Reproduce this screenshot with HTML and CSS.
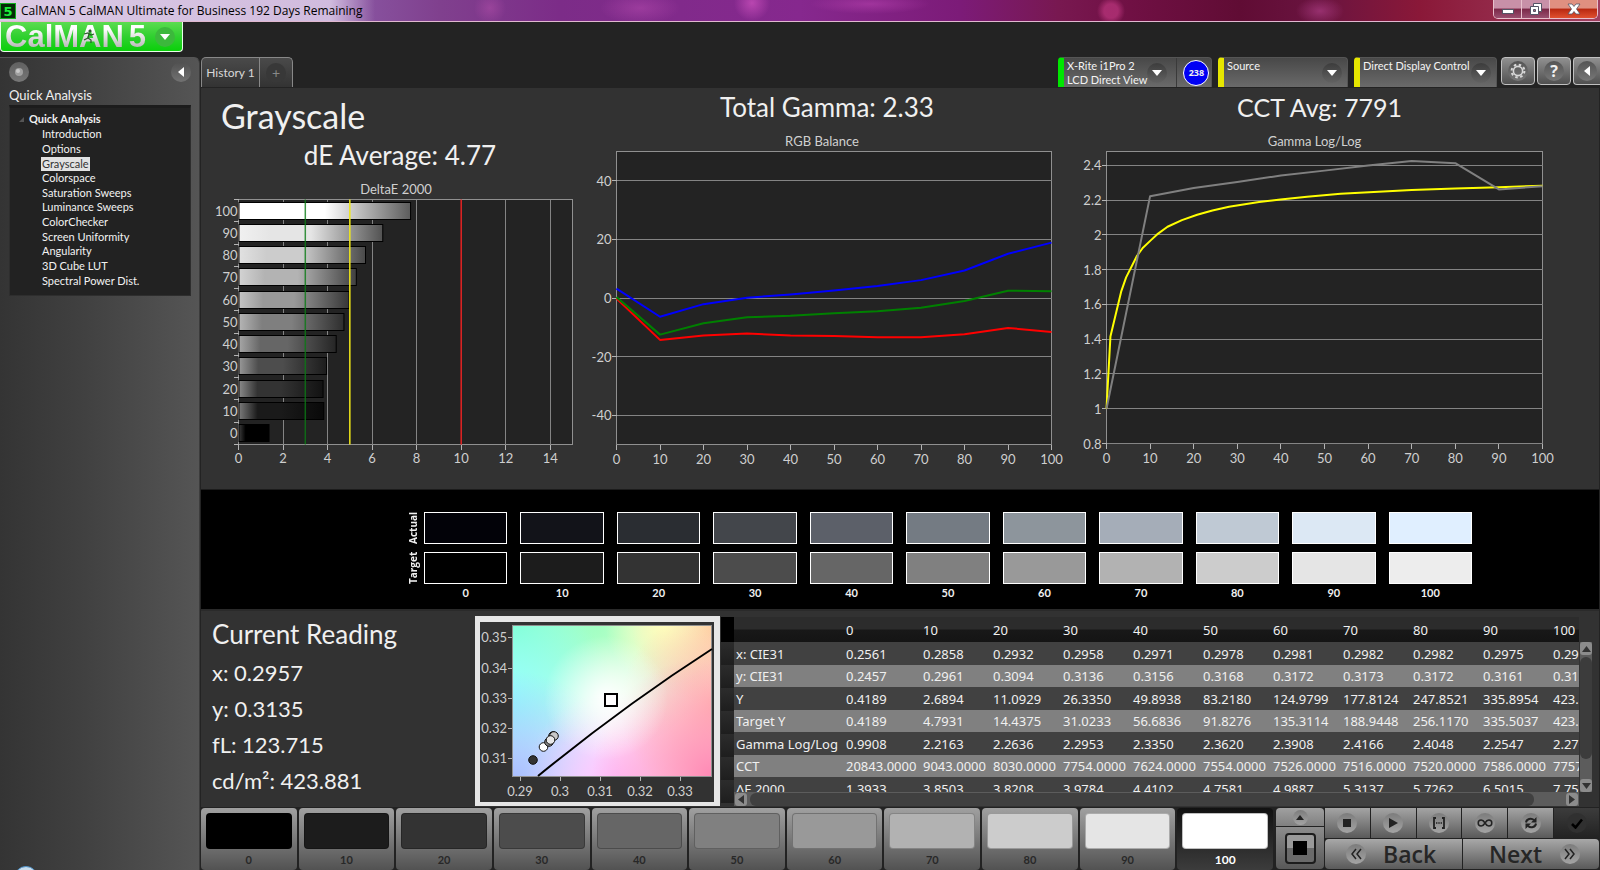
FILE: index.html
```html
<!DOCTYPE html>
<html lang="en">
<head>
<meta charset="utf-8">
<title>CalMAN 5 CalMAN Ultimate for Business 192 Days Remaining</title>
<link rel="stylesheet" href="styles.css">
</head>
<body>
<header class="titlebar">
  <span class="app-icon">5</span>
  <span class="titlebar-text">CalMAN 5 CalMAN Ultimate for Business 192 Days Remaining</span>
  <div class="window-buttons">
    <button class="win-btn" aria-label="Minimize"><svg width="14" height="12" viewBox="0 0 14 12"><rect x="1.5" y="6.500" width="11" height="4" fill="#fff" stroke="#556" /></svg></button>
    <button class="win-btn" aria-label="Restore"><svg width="14" height="14" viewBox="0 0 14 14"><path d="M4.500 1.500h8v8h-8z" fill="#fff" stroke="#556"/><path d="M1.500 4.500h8v8h-8z" fill="#fff" stroke="#556"/><path d="M4.500 7.500h2v2h-2z" fill="#a67" stroke="#556"/></svg></button>
    <button class="win-btn win-close" aria-label="Close"><svg width="14" height="12" viewBox="0 0 14 12"><path d="M1 1h4l2 2.500L9 1h4L9.500 6l3.500 5H9L7 8.500 5 11H1l3.500-5z" fill="#fff" stroke="#556" stroke-width=".8"/></svg></button>
  </div>
</header>

<div class="workspace">
  <aside class="left">
    <button class="logo" aria-label="CalMAN 5 menu">
      <span class="logo-text">CalMAN<span class="logo-num">5</span></span>
      <svg class="runner" width="14" height="16" viewBox="0 0 14 16"><circle cx="8" cy="3" r="1.600" fill="#2a5a2a"/><path d="M2 6l4-1 3 2 3-1M7 6l-1 4 3 2v3M6 10l-4 2" fill="none" stroke="#2a5a2a" stroke-width="1.200"/></svg>
      <span class="logo-drop"><svg width="10" height="6" viewBox="0 0 10 6"><path d="M0 0h10L5 6z" fill="#fff"/></svg></span>
    </button>
    <nav class="sidebar">
      <div class="sidebar-tools">
        <button class="knob" aria-label="Pin"><svg width="10" height="10" viewBox="0 0 10 10"><circle cx="5" cy="5" r="4" fill="#a0a0a0"/><circle cx="4" cy="4" r="2" fill="#c8c8c8"/></svg></button>
        <button class="knob knob-arrow" aria-label="Collapse"><svg width="6" height="10" viewBox="0 0 6 10"><path d="M6 0v10L0 5z" fill="#fff"/></svg></button>
      </div>
      <h2 class="sidebar-title">Quick Analysis</h2>
      <div class="tree">
        <div class="tree-root"><svg width="5" height="5" viewBox="0 0 5 5"><path d="M5 0v5H0z" fill="#555"/></svg><span>Quick Analysis</span></div>
        <ul class="tree-list">
          <li><a href="#">Introduction</a></li>
          <li><a href="#">Options</a></li>
          <li><a href="#" class="selected">Grayscale</a></li>
          <li><a href="#">Colorspace</a></li>
          <li><a href="#">Saturation Sweeps</a></li>
          <li><a href="#">Luminance Sweeps</a></li>
          <li><a href="#">ColorChecker</a></li>
          <li><a href="#">Screen Uniformity</a></li>
          <li><a href="#">Angularity</a></li>
          <li><a href="#">3D Cube LUT</a></li>
          <li><a href="#">Spectral Power Dist.</a></li>
        </ul>
      </div>
      <span class="orb"></span>
    </nav>
  </aside>

  <div class="right">
    <div class="topbar">
      <div class="tabs">
        <button class="tab">History 1</button>
        <button class="tab tab-add" aria-label="Add tab"><span>+</span></button>
      </div>
      <div class="devices">
        <div class="device device-green device-meter">
          <button class="device-main"><span class="device-text">X-Rite i1Pro 2<br>LCD Direct View</span><span class="drop"><svg width="10" height="6" viewBox="0 0 10 6"><path d="M0 0h10L5 6z" fill="#fff"/></svg></span></button>
          <span class="badge-cell"><span class="badge">238</span></span>
        </div>
        <div class="device device-source">
          <button class="device-main"><span class="device-text">Source</span><span class="drop"><svg width="10" height="6" viewBox="0 0 10 6"><path d="M0 0h10L5 6z" fill="#fff"/></svg></span></button>
        </div>
        <div class="device device-display">
          <button class="device-main"><span class="device-text">Direct Display Control</span><span class="drop"><svg width="10" height="6" viewBox="0 0 10 6"><path d="M0 0h10L5 6z" fill="#fff"/></svg></span></button>
        </div>
        <button class="tool" aria-label="Settings"><span class="tool-disc"><svg width="16" height="16" viewBox="0 0 16 16"><circle cx="8" cy="8" r="4.600" fill="none" stroke="#d8d8d8" stroke-width="1.600"/><circle cx="8" cy="8" r="6.400" fill="none" stroke="#d8d8d8" stroke-width="2" stroke-dasharray="2.500 2.526"/></svg></span></button>
        <button class="tool" aria-label="Help"><span class="tool-disc tool-q">?</span></button>
        <button class="tool tool-last" aria-label="Hide"><span class="tool-disc"><svg width="6" height="10" viewBox="0 0 6 10"><path d="M6 0v10L0 5z" fill="#fff"/></svg></span></button>
      </div>
    </div>

    <main class="main">
      <section class="charts">
        <div class="chart-col chart-de">
          <h1 class="page-title">Grayscale</h1>
          <h2 class="metric">dE Average: 4.77</h2>
          <h3 class="chart-title">DeltaE 2000</h3>
          <svg id="chart-de" class="chart" viewBox="0 0 390 280" role="img" aria-label="DeltaE 2000"></svg>
        </div>
        <div class="chart-col chart-rgb">
          <h2 class="metric">Total Gamma: 2.33</h2>
          <h3 class="chart-title">RGB Balance</h3>
          <svg id="chart-rgb" class="chart" viewBox="0 0 472 328" role="img" aria-label="RGB Balance"></svg>
        </div>
        <div class="chart-col chart-gamma">
          <h2 class="metric">CCT Avg: 7791</h2>
          <h3 class="chart-title">Gamma Log/Log</h3>
          <svg id="chart-gamma" class="chart" viewBox="0 0 497 328" role="img" aria-label="Gamma Log/Log"></svg>
        </div>
      </section>

      <section class="band">
        <div class="band-labels"><span>Actual</span><span>Target</span></div>
        <div class="band-grid" id="band"></div>
      </section>

      <section class="details">
        <div class="reading">
          <h2>Current Reading</h2>
          <p>x: 0.2957</p>
          <p>y: 0.3135</p>
          <p>fL: 123.715</p>
          <p>cd/m²: 423.881</p>
        </div>
        <svg id="chart-cie" class="cie" width="245" height="190" viewBox="0 0 245 190" role="img" aria-label="CIE chart"></svg>
        <div class="grid-view">
          <div class="row-heads"><i></i><i></i><i></i><i></i><i></i><i></i><i></i><i></i></div>
          <div class="table-clip"><table id="data"></table></div>
          <div class="vscroll"><button aria-label="Scroll up"><svg width="9" height="6" viewBox="0 0 9 6"><path d="M4.500 0L9 6H0z" fill="#333"/></svg></button><span class="vthumb"></span><button aria-label="Scroll down"><svg width="9" height="6" viewBox="0 0 9 6"><path d="M0 0h9L4.500 6z" fill="#333"/></svg></button></div>
          <div class="hscroll"><button aria-label="Scroll left"><svg width="6" height="9" viewBox="0 0 6 9"><path d="M6 0v9L0 4.500z" fill="#333"/></svg></button><span class="hthumb"></span><button aria-label="Scroll right"><svg width="6" height="9" viewBox="0 0 6 9"><path d="M0 0v9l6-4.500z" fill="#333"/></svg></button></div>
        </div>
      </section>

      <footer class="footer">
        <div class="cards" id="cards"></div>
        <div class="pattern">
          <button class="pattern-up" aria-label="Expand"><span class="disc disc-small"><svg width="8" height="5" viewBox="0 0 8 5"><path d="M4 0l4 5H0z" fill="#222"/></svg></span></button>
          <button class="pattern-window" aria-label="Pattern window"><span><i></i></span></button>
        </div>
        <div class="controls">
          <div class="transport">
            <button aria-label="Stop"><span class="disc"><svg width="10" height="10" viewBox="0 0 10 10"><path d="M1 1h8v8H1z" fill="#222"/></svg></span></button>
            <button aria-label="Play"><span class="disc"><svg width="10" height="10" viewBox="0 0 10 10"><path d="M1 0l9 5-9 5z" fill="#222"/></svg></span></button>
            <button aria-label="Read series"><span class="disc"><svg width="14" height="12" viewBox="0 0 14 12"><path d="M4 1H2v10h2M10 1h2v10h-2" fill="none" stroke="#222" stroke-width="1.800"/><path d="M4 6h6" stroke="#222" stroke-width="1.600" stroke-dasharray="1.400 .9"/></svg></span></button>
            <button aria-label="Continuous"><span class="disc"><svg width="16" height="10" viewBox="0 0 16 10"><path d="M8 5C6.500 2.500 5.500 2 4.200 2a3 3 0 0 0 0 6C5.500 8 6.500 7.500 8 5s2.500-3 3.800-3a3 3 0 0 1 0 6C10.500 8 9.500 7.500 8 5z" fill="none" stroke="#222" stroke-width="1.500"/></svg></span></button>
            <button aria-label="Refresh"><span class="disc"><svg width="14" height="14" viewBox="0 0 14 14"><path d="M2 6.500C2.500 3 7 1.500 10 4M12 7.500C11.500 11 7 12.500 4 10" fill="none" stroke="#222" stroke-width="2"/><path d="M12.500 1v5.500H7zM1.500 13V7.500H7z" fill="#222"/></svg></span></button>
            <button class="dark" aria-label="Accept"><span class="disc disc-dark"><svg width="12" height="11" viewBox="0 0 12 11"><path d="M1 6l3.500 3.500L11 1.500" fill="none" stroke="#000" stroke-width="2.600"/></svg></span></button>
          </div>
          <div class="steps">
            <button class="back"><span class="disc"><svg width="12" height="12" viewBox="0 0 12 12"><path d="M6 1L2 6l4 5M11 1L7 6l4 5" fill="none" stroke="#222" stroke-width="1.500"/></svg></span><span>Back</span></button>
            <button class="next"><span>Next</span><span class="disc"><svg width="12" height="12" viewBox="0 0 12 12"><path d="M1 1l4 5-4 5M6 1l4 5-4 5" fill="none" stroke="#222" stroke-width="1.500"/></svg></span></button>
          </div>
        </div>
      </footer>
    </main>
  </div>
</div>
<script src="app.js"></script>
</body>
</html>
```
FILE: styles.css
```css
* { box-sizing: border-box; }
body {
  margin: 0;
  min-height: 100vh;
  display: flex;
  flex-direction: column;
  background: #232323;
  color: #f0f0f0;
  font-family: Lato, "Open Sans", sans-serif;
  font-size: 12px;
  overflow: hidden;
}
button { font: inherit; color: inherit; border: 0; padding: 0; background: none; }
h1, h2, h3, p, ul { margin: 0; padding: 0; font-weight: 400; }
svg { display: block; }

/* Title bar */
.titlebar {
  flex: none;
  height: 22px;
  display: flex;
  align-items: center;
  border-bottom: 1px solid #e0b8d0;
  background:
    linear-gradient(90deg, rgba(226, 212, 236, .8) 0, rgba(226, 212, 236, .8) 330px, rgba(226, 212, 236, 0) 375px),
    radial-gradient(circle 16px at 490px 8px, rgba(180, 80, 170, .5), transparent),
    radial-gradient(circle 18px at 752px 3px, rgba(220, 90, 200, .6), transparent),
    radial-gradient(circle 14px at 1111px 11px, rgba(180, 50, 120, .8) 50%, transparent),
    radial-gradient(ellipse 40px 16px at 640px 8px, rgba(190, 80, 180, .45), transparent),
    radial-gradient(ellipse 60px 10px at 870px 4px, rgba(190, 70, 180, .5), transparent),
    radial-gradient(ellipse 24px 14px at 1320px 11px, rgba(170, 60, 130, .7), transparent),
    linear-gradient(90deg, #c0a0c8 0, #8a58a4 340px, #80408e 440px, #7c2c88 560px, #86288e 800px, #7c1b78 960px, #781850 1060px, #701044 1130px, #600c34 1240px, #6a1440 1320px, #8a1838 1420px, #a04060 1600px);
}
.app-icon {
  width: 16px;
  height: 16px;
  line-height: 15px;
  text-align: center;
  font-family: "DejaVu Sans", sans-serif;
  font-weight: 700;
  font-size: 13px;
  color: #1cf03c;
  background: #052a08;
  border: 1px solid #12b020;
}
.titlebar-text { margin-left: 5px; color: #000; font-family: "Open Sans", sans-serif; font-size: 12px; }
.window-buttons {
  margin: 0 2px 0 auto;
  align-self: flex-start;
  display: flex;
  height: 19px;
  border: 1px solid #e8c0cc;
  border-top: 0;
  border-radius: 0 0 5px 5px;
  overflow: hidden;
}
.win-btn { width: 28px; display: grid; place-items: center; background: linear-gradient(#c890a8 45%, #7a2848 50%, #9a5070); border-right: 1px solid #e8c0cc; }
.win-close { width: 47px; border: 0; background: linear-gradient(#e09080 45%, #b82810 50%, #e05030); }

.workspace { flex: 1; display: flex; min-height: 0; }
.left { width: 200px; flex: none; display: flex; flex-direction: column; gap: 5px; }

/* Logo */
.logo {
  position: relative;
  width: 183px;
  height: 30px;
  padding: 0 7px 0 4px;
  display: flex;
  align-items: center;
  justify-content: space-between;
  border: 1px solid #e8ffe8;
  border-top: 0;
  border-radius: 0 0 4px 4px;
  background: linear-gradient(#5cdc50, #30d030 50%, #0ad00a);
}
.logo-text {
  font-family: "Liberation Sans", Arial, sans-serif;
  font-weight: 700;
  font-size: 31px;
  line-height: 26px;
  background: linear-gradient(#fff 20%, #b8b8b8 90%);
  -webkit-background-clip: text;
  background-clip: text;
  color: transparent;
}
.logo-num { margin-left: 5px; }
.runner { position: absolute; left: 81px; top: 6px; }
.logo-drop { width: 20px; height: 20px; border-radius: 50%; background: #3cb83c; display: grid; place-items: center; }

/* Sidebar */
.sidebar {
  flex: 1;
  position: relative;
  padding: 4px 8px 0 9px;
  overflow: hidden;
  border-top: 1px solid #555;
  border-right: 1px solid #3c3c3c;
  border-radius: 0 6px 0 0;
  background: linear-gradient(90deg, #343434, #404040 40%, #555);
}
.sidebar-tools { display: flex; justify-content: space-between; }
.knob { width: 20px; height: 20px; border-radius: 50%; background: linear-gradient(#606060, #777); display: grid; place-items: center; }
.knob-arrow { background: linear-gradient(#505050, #727272); }
.sidebar-title { margin-top: 4px; font-size: 13px; line-height: 18px; }
.tree { margin-top: 1px; height: 191px; padding: 3px 0 5px 9px; background: #222; border: 1px solid #2e2e2e; border-top: 3px solid #1c1c1c; }
.tree-root { display: flex; align-items: center; gap: 5px; height: 16px; font-weight: 700; font-size: 11px; line-height: 16px; }
.tree-list { list-style: none; margin-left: 22px; height: 161px; display: grid; grid-auto-rows: 1fr; }
.tree-list li { display: flex; align-items: center; }
.tree-list a { color: #f2f2f2; text-decoration: none; font-size: 11px; line-height: 14px; padding: 0 1px; }
.tree-list .selected { background: #e2e2e2; color: #333; }
.orb { position: absolute; left: 14px; bottom: -20px; width: 24px; height: 24px; border-radius: 50%; background: #c8dcec; border: 1px solid #4a90c8; }

/* Top bar */
.right { flex: 1; min-width: 0; display: flex; flex-direction: column; padding: 0 1px; }
.topbar { flex: none; height: 66px; display: flex; justify-content: space-between; align-items: flex-end; margin-right: -1px; padding-bottom: 1px; }
.tabs { display: flex; height: 30px; border: 1px solid #888; border-bottom: 0; border-radius: 5px 5px 0 0; background: linear-gradient(#4a4a4a, #333); }
.tab { width: 57px; font-size: 12px; color: #d8d8d8; white-space: nowrap; }
.tab-add { width: 33px; border-left: 1px solid #888; display: grid; place-items: center; }
.tab-add span { width: 20px; height: 20px; line-height: 19px; border-radius: 50%; background: #383838; color: #888; font-size: 14px; }
.devices { display: flex; align-items: flex-end; }
.device {
  height: 30px;
  display: flex;
  margin-right: 6px;
  overflow: hidden;
  border: 1px solid #555;
  border-bottom: 0;
  border-left: 6px solid #e6e600;
  border-radius: 4px 4px 0 0;
  background: linear-gradient(#484848, #6a6a6a);
}
.device-green { border-left-color: #00e600; }
.device-meter { width: 154px; }
.device-source { width: 130px; }
.device-display { width: 143px; margin-right: 4px; }
.device-main { flex: 1; display: flex; justify-content: space-between; padding: 0 5px 0 3px; text-align: left; }
.device-text { font-size: 11px; line-height: 14px; white-space: nowrap; padding-top: 1px; color: #f4f4f4; }
.drop { width: 20px; height: 20px; margin-top: 5px; flex: none; border-radius: 50%; background: linear-gradient(#3c3c3c, #626262); display: grid; place-items: center; }
.device-meter .device-main { padding-right: 9px; }
.badge-cell { flex: none; width: 35px; padding-left: 4px; border-left: 1px solid #3a3a3a; display: grid; place-items: center; }
.badge { width: 26px; height: 26px; line-height: 24px; border-radius: 50%; border: 1px solid #fff; background: #0000f4; text-align: center; font-size: 9px; font-weight: 700; font-family: "Open Sans", sans-serif; }
.tool { width: 34px; height: 28px; margin: 0 2px 2px 0; border: 1px solid #c0c0c0; border-radius: 4px; background: linear-gradient(#909090, #505050); display: grid; place-items: center; }
.tool-last { width: 27px; margin-right: 0; border-right: 0; border-radius: 4px 0 0 4px; }
.tool-disc { width: 20px; height: 20px; border-radius: 50%; background: linear-gradient(#555, #777); display: grid; place-items: center; }
.tool-q { font: 700 16px/20px "Open Sans", sans-serif; }

/* Main */
.main { flex: 1; display: flex; flex-direction: column; background: #323232; min-height: 0; }
.charts { flex: 1; display: grid; grid-template-columns: 390fr 480fr 528fr; min-height: 0; }
.chart-rgb { padding-right: 8px; }
.chart-gamma { padding-right: 31px; }
.chart { width: 100%; height: auto; }
.page-title { padding: 6px 0 0 20px; font-size: 34px; line-height: 44px; }
.metric { text-align: center; font-size: 26px; line-height: 38px; }
.chart-de .metric { line-height: 34px; padding-left: 8px; }
.chart-gamma .metric { font-size: 25px; }
.chart-title { text-align: center; font-size: 13px; line-height: 14px; color: #d0d0d0; }
.chart-de .chart-title { padding-top: 10px; }
.chart-rgb .chart-title, .chart-gamma .chart-title { padding-right: 10px; padding-top: 8px; }
.chart text, .cie text { font-family: Lato, sans-serif; font-size: 13px; fill: #cfcfcf; }
.frame { fill: #232323; stroke: #909090; }
.gridline { stroke: #848484; shape-rendering: crispEdges; }
.tick { stroke: #b4b4b4; shape-rendering: crispEdges; }
.series { fill: none; stroke-width: 2; stroke-linejoin: round; }

/* Swatch band */
.band { flex: none; height: 120px; padding: 22px 127px 0 206px; display: flex; gap: 4px; background: #000; border-top: 1px solid #1c1c1c; }
.band-labels { width: 13px; display: flex; flex-direction: column; gap: 8px; }
.band-labels span { height: 32px; width: 13px; writing-mode: vertical-rl; transform: rotate(180deg); font: 700 10px/13px "Open Sans", sans-serif; text-align: center; }
.band-grid { flex: 1; display: grid; grid-template-columns: repeat(11, 1fr); gap: 13px; }
.pair { display: flex; flex-direction: column; gap: 8px; text-align: center; font-size: 12px; line-height: 18px; }
.swatch { height: 32px; border: 1px solid #fff; }
.pair b { font-weight: 700; font-size: 11px; line-height: 16px; margin-top: -7px; }

/* Details */
.details { flex: none; height: 198px; display: flex; padding: 6px 7px 0 0; border-top: 2px solid #2a2a2a; }
.reading { flex: none; width: 274px; padding-left: 11px; }
.reading h2 { font-size: 26px; line-height: 34px; margin-bottom: 4px; }
.reading p { font-size: 22px; line-height: 36px; }
.cie { flex: none; margin-top: -1px; }
.grid-view { flex: 1; min-width: 0; display: grid; grid-template-columns: 13px 1fr 13px; grid-template-rows: 175px 14px; margin-left: 1px; }
.row-heads { grid-row: 1 / 3; display: flex; flex-direction: column; overflow: hidden; }
.row-heads i { flex: none; height: 23px; background: linear-gradient(#2c2c2c, #1e1e1e); }
.row-heads i:first-child { height: 25px; background: #000; }
.table-clip { overflow: hidden; }
table { border-collapse: collapse; table-layout: fixed; width: 887px; font-family: "Noto Sans", sans-serif; font-size: 13px; }
th, td { padding: 0 0 0 2px; text-align: left; font-weight: 400; white-space: nowrap; height: 23px; line-height: 20px; }
thead th { height: 25px; font-size: 13px; }
thead { background: linear-gradient(#2c2c2c 48%, #181818 52%, #141414); }
tbody tr { background: #414141; }
tbody tr:nth-child(even) { background: #808080; }
tbody tr:nth-child(even) > * { height: 22px; }
.c-label { width: 110px; }
.c-first { width: 77px; }
.c-rest { width: 70px; }
.vscroll { margin: 25px 0 0 1px; display: flex; flex-direction: column; gap: 2px; background: #5c5c5c; }
.vscroll button, .hscroll button { flex: none; width: 12px; height: 13px; background: #8c8c8c; border-radius: 3px; display: grid; place-items: center; }
.vthumb { flex: none; height: 102px; border-radius: 6px; background: #3c3c3c; }
.vscroll button:last-child { margin-top: auto; }
.hscroll { grid-column: 2; display: flex; align-items: center; gap: 3px; background: #5c5c5c; padding: 0 1px; }
.hthumb { flex: none; width: 93%; height: 13px; border-radius: 6px; background: #404040; }
.hscroll button:last-child { margin-left: auto; }

/* Footer */
.footer { flex: none; height: 63px; display: flex; gap: 2px; padding: 1px 0; background: #222; }
.cards { flex: 1; display: grid; grid-template-columns: repeat(11, 1fr); gap: 2px; }
.card { display: flex; flex-direction: column; padding: 5px 5px 0; border-radius: 4px; background: linear-gradient(#a0a0a0, #525252); font-size: 11px; font-weight: 700; color: #282828; }
.card span { line-height: 20px; margin-top: 1px; }
.card i { height: 36px; border-radius: 4px; border: 1px solid rgba(0, 0, 0, .25); }
.card.active { background: linear-gradient(#111, #3c3c3c); color: #fff; font-size: 12px; }
.pattern { flex: none; width: 48px; margin-left: 1px; display: flex; flex-direction: column; gap: 1px; }
.pattern button { background: linear-gradient(#a0a0a0, #808080); border-radius: 4px 4px 0 0; display: grid; place-items: center; }
.pattern .pattern-up { height: 18px; }
.pattern .pattern-window { flex: 1; background: linear-gradient(#8c8c8c, #585858); border-radius: 0 0 4px 4px; }
.pattern-window span { width: 31px; height: 31px; border: 2px solid #1c1c1c; border-radius: 4px; display: grid; place-items: center; background: linear-gradient(#999 50%, #6a6a6a 50%); }
.pattern-window i { width: 14px; height: 14px; background: #000; }
.disc { flex: none; width: 20px; height: 20px; border-radius: 50%; display: grid; place-items: center; background: linear-gradient(#7c7c7c, #a4a4a4); }
.disc-small { width: 15px; height: 15px; }
.disc-dark { background: #303030; }
.controls { flex: none; width: 274px; display: grid; grid-template-rows: 30px 30px; gap: 1px; margin-left: -1px; }
.transport { display: grid; grid-template-columns: repeat(6, 1fr); gap: 1px; }
.transport button { display: grid; place-items: center; background: linear-gradient(#a4a4a4, #5a5a5a); }
.transport .dark { background: linear-gradient(#3c3c3c, #222); }
.steps { display: grid; grid-template-columns: 1fr 1fr; gap: 1px; }
.steps button { display: flex; align-items: center; background: linear-gradient(#a8a8a8, #5a5a5a); color: #262626; font: 600 23px/30px "Open Sans", sans-serif; }
.steps .back { gap: 17px; padding-left: 21px; border-radius: 4px 0 0 4px; }
.steps .next { justify-content: flex-end; gap: 18px; padding-right: 19px; border-radius: 0 4px 4px 0; }
```
FILE: app.js
```js
const LEVELS = [0, 10, 20, 30, 40, 50, 60, 70, 80, 90, 100];

const line = (cls, x1, y1, x2, y2, extra = "") =>
  `<line class="${cls}" x1="${x1}" y1="${y1}" x2="${x2}" y2="${y2}" ${extra}/>`;
const label = (x, y, text, anchor) =>
  `<text x="${x}" y="${y}" text-anchor="${anchor}">${text}</text>`;

function lineChart(id, box, range, yTicks, series) {
  const { x, y, w, h } = box;
  const px = v => x + (v / 100) * w;
  const py = v => y + h - ((v - range[0]) / (range[1] - range[0])) * h;
  let out = `<rect class="frame" x="${x}" y="${y}" width="${w}" height="${h}"/>`;
  for (const t of yTicks) {
    out += line("gridline", x, py(t), x + w, py(t));
    out += line("tick", x - 5, py(t), x, py(t));
    out += label(x - 5, py(t) + 5, t, "end");
  }
  for (const t of LEVELS) {
    out += line("tick", px(t), y + h, px(t), y + h + 5);
    out += label(px(t), y + h + 19, t, "middle");
  }
  for (const s of series) {
    const pts = s.points.map(p => `${px(p[0])},${py(p[1])}`).join(" ");
    out += `<polyline class="series" stroke="${s.color}" points="${pts}"/>`;
  }
  document.getElementById(id).innerHTML = out;
}

const zip = values => values.map((v, i) => [LEVELS[i], v]);

lineChart("chart-rgb", { x: 25.5, y: 3.5, w: 435, h: 293 }, [-50, 50], [40, 20, 0, -20, -40], [
  { color: "#00f", points: zip([3.2, -6.4, -2.1, 0.1, 1.2, 2.6, 4.1, 6.1, 9.4, 15.1, 18.9]) },
  { color: "#f00", points: zip([-0.2, -14.3, -12.8, -12.1, -12.8, -13, -13.4, -13.4, -12.4, -10.2, -11.6]) },
  { color: "#008000", points: zip([0.3, -12.5, -8.6, -6.6, -6.1, -5.2, -4.5, -3.3, -1, 2.5, 2.3]) }
]);

lineChart("chart-gamma", { x: 35.5, y: 3.5, w: 436, h: 292 }, [0.8, 2.48], [2.4, 2.2, 2, 1.8, 1.6, 1.4, 1.2, 1, 0.8], [
  { color: "#ff0", points: [[0, 1], [0.9, 1.415], [3.4, 1.677], [4.5, 1.756], [7, 1.88], [8.3, 1.925], [10.2, 1.97], [11.6, 2.003], [14, 2.047], [17.3, 2.085], [20.8, 2.116], [24.3, 2.141], [28.1, 2.162], [35, 2.19], [39.9, 2.204], [46, 2.22], [53.7, 2.237], [60.2, 2.246], [70, 2.258], [80, 2.267], [90, 2.275], [100, 2.283]] },
  { color: "#808080", points: zip([1, 2.223, 2.27, 2.304, 2.342, 2.37, 2.4, 2.425, 2.413, 2.262, 2.28]) }
]);

/* DeltaE bars */
(function () {
  const x = 37.5, y = 3.5, w = 334, h = 245, row = h / 11;
  const values = [1.3933, 3.8503, 3.8208, 3.9784, 4.4102, 4.7581, 4.9887, 5.3137, 5.7262, 6.5015, 7.75];
  const px = v => x + (v / 15) * w;
  const gray = v => `rgb(${v},${v},${v})`;
  let out = "<defs>";
  LEVELS.forEach((l, i) => {
    const b = Math.round(l * 2.55);
    const start = l ? Math.round(b + (255 - b) * 0.42) : 60;
    out += `<linearGradient id="bar${i}"><stop offset="0" stop-color="${gray(start)}"/><stop offset=".22" stop-color="${gray(b)}"/><stop offset=".5" stop-color="${gray(b)}"/><stop offset="1" stop-color="${gray(Math.round(b * 0.36))}"/></linearGradient>`;
  });
  out += `</defs><rect class="frame" x="${x}" y="${y}" width="${w}" height="${h}"/>`;
  for (let t = 0; t <= 14; t += 2) {
    if (t) out += line("gridline", px(t), y, px(t), y + h);
    out += line("tick", px(t), y + h, px(t), y + h + 5);
    out += label(px(t), y + h + 18, t, "middle");
  }
  for (let i = 0; i <= 11; i++) out += line("tick", x - 5, y + i * row, x, y + i * row);
  LEVELS.forEach((l, i) => {
    const top = Math.round(y + h - (i + 1) * row + 3) - 0.5;
    out += `<rect x="${x + 0.5}" y="${top}" width="${px(values[i]) - x - 1}" height="17" fill="url(#bar${i})" stroke="#000"/>`;
    out += label(x - 1, top + 13, l, "end");
  });
  out += line("", px(3), y, px(3), y + h, 'stroke="#0a7a14" stroke-opacity=".8" stroke-width="1.500"');
  out += line("", px(5), y, px(5), y + h, 'stroke="#f0e818" stroke-width="1.500"');
  out += line("", px(10), y, px(10), y + h, 'stroke="#e01c1c" stroke-width="1.500"');
  document.getElementById("chart-de").innerHTML = out;
})();

/* Chromaticity chart */
(function () {
  const rg = (id, cx, cy, r, c) =>
    `<radialGradient id="${id}" gradientUnits="userSpaceOnUse" cx="${cx}" cy="${cy}" r="${r}"><stop offset="0" stop-color="${c}"/><stop offset="1" stop-color="${c}" stop-opacity="0"/></radialGradient>`;
  const blobs = [
    [125, 5, 130, "#b4ffbc"], [38, 9, 130, "#7dffc8"], [30, 85, 110, "#90ffff"], [38, 165, 110, "#a8bcff"],
    [140, 165, 90, "#ffc0ff"], [237, 9, 80, "#ffc898"], [190, 9, 60, "#ffffbc"], [245, 90, 100, "#ffbcac"], [237, 160, 120, "#ff88b4"],
    [131, 82, 62, "#fff"]
  ];
  let out = "<defs>" + blobs.map((b, i) => rg("cie" + i, ...b)).join("") + "</defs>";
  out += '<rect width="245" height="190" fill="#e6e6e6"/><rect x="5" y="6" width="234" height="180" fill="#323232"/>';
  out += '<rect x="37" y="9" width="200" height="151" fill="#fff"/>';
  out += blobs.map((b, i) => `<rect x="37" y="9" width="200" height="151" fill="url(#cie${i})"/>`).join("");
  out += '<rect x="37.500" y="9.500" width="199" height="151" fill="none" stroke="#909090"/>';
  [["0.35", 21], ["0.34", 52], ["0.33", 82], ["0.32", 112], ["0.31", 142]].forEach(([t, y]) => {
    out += line("tick", 33, y + 0.5, 37, y + 0.5) + label(32, y + 5, t, "end");
  });
  [["0.29", 45], ["0.3", 85], ["0.31", 125], ["0.32", 165], ["0.33", 205]].forEach(([t, x]) => {
    out += line("tick", x + 0.5, 161, x + 0.5, 165) + label(x, 180, t, "middle");
  });
  out += '<path d="M63 160Q150 89 237 33" fill="none" stroke="#000" stroke-width="2"/>';
  out += '<rect x="130" y="78" width="12" height="12" fill="#fff" stroke="#000" stroke-width="2"/>';
  [[58, 144, "#333"], [68.5, 131, "#fff"], [74, 126, "#888"], [78, 120, "#b8b8b8"], [79, 120, "#c8c8c8"], [75.5, 124, "#e8e8e8"]].forEach(([x, y, c]) => {
    out += `<circle cx="${x}" cy="${y}" r="4.300" fill="${c}" stroke="#111"/>`;
  });
  document.getElementById("chart-cie").innerHTML = out;
})();

/* Actual / target swatches */
const ACTUAL = ["#020208", "#121319", "#2a2d32", "#43464b", "#5c6069", "#747b83", "#8d959c", "#a5adb8", "#bfc9d4", "#dce8f4", "#e0efff"];
const TARGET = ["#000", "#1c1c1c", "#333", "#4c4c4c", "#666", "#808080", "#999", "#b2b2b2", "#ccc", "#e5e5e5", "#ededed"];
document.getElementById("band").innerHTML = LEVELS.map((l, i) =>
  `<div class="pair"><div class="swatch" style="background:${ACTUAL[i]}"></div><div class="swatch" style="background:${TARGET[i]}"></div><b>${l}</b></div>`).join("");

document.getElementById("cards").innerHTML = LEVELS.map((l, i) =>
  `<button class="card${l === 100 ? " active" : ""}"><i style="background:${l === 100 ? "#fff" : TARGET[i]}"></i><span>${l}</span></button>`).join("");

/* Readings table */
const ROWS = [
  ["x: CIE31", "0.2561 0.2858 0.2932 0.2958 0.2971 0.2978 0.2981 0.2982 0.2982 0.2975 0.2957"],
  ["y: CIE31", "0.2457 0.2961 0.3094 0.3136 0.3156 0.3168 0.3172 0.3173 0.3172 0.3161 0.3135"],
  ["Y", "0.4189 2.6894 11.0929 26.3350 49.8938 83.2180 124.9799 177.8124 247.8521 335.8954 423.8810"],
  ["Target Y", "0.4189 4.7931 14.4375 31.0233 56.6836 91.8276 135.3114 188.9448 256.1170 335.5037 423.8810"],
  ["Gamma Log/Log", "0.9908 2.2163 2.2636 2.2953 2.3350 2.3620 2.3908 2.4166 2.4048 2.2547 2.2700"],
  ["CCT", "20843.0000 9043.0000 8030.0000 7754.0000 7624.0000 7554.0000 7526.0000 7516.0000 7520.0000 7586.0000 7757.0000"],
  ["ΔE 2000", "1.3933 3.8503 3.8208 3.9784 4.4102 4.7581 4.9887 5.3137 5.7262 6.5015 7.7500"]
];
document.getElementById("data").innerHTML =
  '<colgroup><col class="c-label"><col class="c-first">' + '<col class="c-rest">'.repeat(10) + "</colgroup>" +
  "<thead><tr><th></th>" + LEVELS.map(l => `<th scope="col">${l}</th>`).join("") + "</tr></thead><tbody>" +
  ROWS.map(([name, vals]) => `<tr><th scope="row">${name}</th>${vals.split(" ").map(v => `<td>${v}</td>`).join("")}</tr>`).join("") + "</tbody>";
```
